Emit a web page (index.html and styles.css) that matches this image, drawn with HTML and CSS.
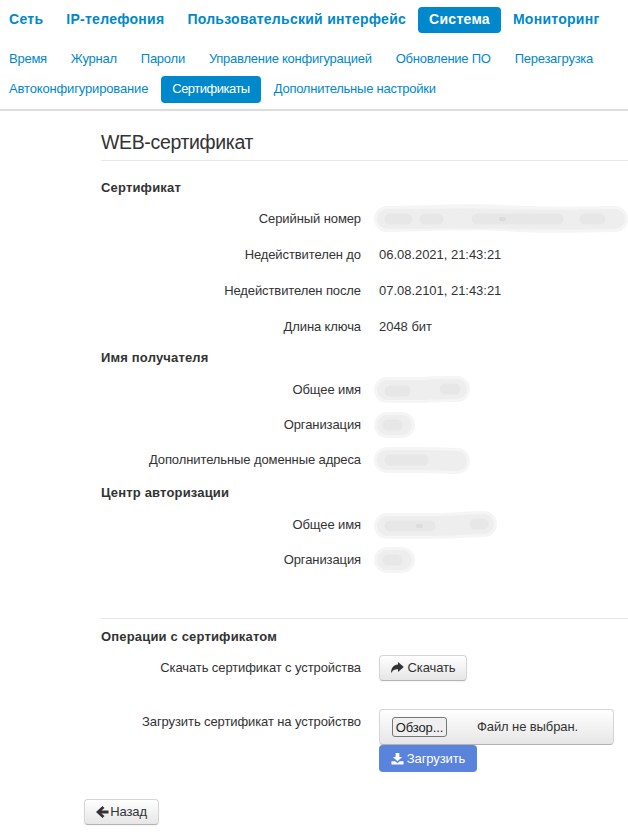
FILE: index.html
```html
<!DOCTYPE html>
<html lang="ru">
<head>
<meta charset="utf-8">
<title>WEB-сертификат</title>
<link rel="stylesheet" href="styles.css">
</head>
<body>
<header class="topbar">
  <nav class="nav-main">
    <a class="pill" href="#">Сеть</a>
    <a class="pill" href="#">IP-телефония</a>
    <a class="pill" href="#">Пользовательский интерфейс</a>
    <a class="pill active" href="#">Система</a>
    <a class="pill" href="#">Мониторинг</a>
  </nav>
  <nav class="nav-sub">
    <a class="pill" href="#">Время</a>
    <a class="pill" href="#">Журнал</a>
    <a class="pill" href="#">Пароли</a>
    <a class="pill" href="#">Управление конфигурацией</a>
    <a class="pill" href="#">Обновление ПО</a>
    <a class="pill" href="#">Перезагрузка</a>
    <a class="pill" href="#">Автоконфигурирование</a>
    <a class="pill active" href="#">Сертификаты</a>
    <a class="pill" href="#">Дополнительные настройки</a>
  </nav>
</header>
<main class="content">
  <h1 class="title">WEB-сертификат</h1>
  <h2 class="group first">Сертификат</h2>
  <div class="row"><span class="label">Серийный номер</span>
    <svg class="blob" width="254" height="26" viewBox="0 0 254 26">
      <path class="b1" d="M13 13 C60 12 100 10 130 12 S200 14 241 13"/>
      <path class="b2" d="M13 13 C60 13 100 12 130 13 S200 14 241 13"/>
      <path class="b3" d="M16 13H33M51 13H64M103 13H184M211 13H226"/>
      <path class="b4" d="M127 13H130"/>
    </svg>
  </div>
  <div class="row"><span class="label">Недействителен до</span><span class="value">06.08.2021, 21:43:21</span></div>
  <div class="row"><span class="label">Недействителен после</span><span class="value">07.08.2101, 21:43:21</span></div>
  <div class="row"><span class="label">Длина ключа</span><span class="value">2048 бит</span></div>
  <h2 class="group">Имя получателя</h2>
  <div class="row sub-first"><span class="label">Общее имя</span>
    <svg class="blob" width="96" height="26" viewBox="0 0 96 26">
      <path class="b1" d="M13 13H50C60 12 70 12 83 12"/>
      <path class="b2" d="M13 13H50C60 12 70 12 83 12"/>
      <path class="b3" d="M16 14H31M71 12H81"/>
    </svg>
  </div>
  <div class="row tight"><span class="label">Организация</span>
    <svg class="blob" width="42" height="26" viewBox="0 0 42 26">
      <path class="b1" d="M13 13H28"/><path class="b2" d="M13 13H28"/><path class="b3" d="M14 13H23"/>
    </svg>
  </div>
  <div class="row tight"><span class="label">Дополнительные доменные адреса</span>
    <svg class="blob" width="96" height="26" viewBox="0 0 96 26">
      <path class="b1" d="M13 13H50L83 14"/>
      <path class="b2" d="M13 13H50L83 14"/>
      <path class="b3" d="M16 13H49"/>
    </svg>
  </div>
  <h2 class="group">Центр авторизации</h2>
  <div class="row sub-first"><span class="label">Общее имя</span>
    <svg class="blob" width="124" height="26" viewBox="0 0 124 26">
      <path class="b1" d="M13 14H60C80 14 95 12 110 12"/>
      <path class="b2" d="M13 14H60C80 14 95 12 110 12"/>
      <path class="b3" d="M16 14H56M101 12H109"/>
      <path class="b4" d="M44 14H47"/>
    </svg>
  </div>
  <div class="row tight"><span class="label">Организация</span>
    <svg class="blob" width="42" height="26" viewBox="0 0 42 26">
      <path class="b1" d="M13 13H28"/><path class="b2" d="M13 13H28"/><path class="b3" d="M14 13H23"/>
    </svg>
  </div>
  <hr class="divider">
  <h2 class="group ops">Операции с сертификатом</h2>
  <div class="row action"><span class="label">Скачать сертификат с устройства</span>
    <button class="btn download" type="button">
      <svg class="icon" viewBox="0 0 14 14" width="14" height="14"><path d="M8 1 13.800 6 8 11V8.300C4.500 8.300 2.500 9.200 1 12.500 1 7.200 3.500 3.700 8 3.600Z"/></svg>Скачать
    </button>
  </div>
  <div class="row upload"><span class="label">Загрузить сертификат на устройство</span>
    <div class="upload-col">
      <div class="file"><button class="browse" type="button">Обзор...</button><span class="file-name">Файл не выбран.</span></div>
      <button class="btn primary" type="button">
        <svg class="icon" viewBox="0 0 14 14" width="13" height="13"><path d="M5 1H9V5.500H12L7 10 2 5.500H5ZM0.500 10H4.500L7 12 9.500 10H13.500V13.500H0.500Z"/></svg>Загрузить
      </button>
    </div>
  </div>
</main>
<footer class="back">
  <button class="btn btn-back" type="button">
    <svg class="icon" viewBox="0 0 14 14" width="14" height="14"><path d="M7.500 1 9.500 3 6.500 5.500H13.500V8.500H6.500L9.500 11 7.500 13 1 7Z"/></svg>Назад
  </button>
</footer>
</body>
</html>
```
FILE: styles.css
```css
* { box-sizing: border-box; }
html, body { margin: 0; padding: 0; }
body {
  width: 628px;
  height: 835px;
  overflow: hidden;
  background: #fff;
  font-family: "Liberation Sans", Arial, sans-serif;
  font-size: 13px;
  line-height: 20px;
  color: #333;
}
.topbar {
  height: 111px;
  padding-top: 7px;
  border-bottom: 2px solid #ddd;
}
.nav-main, .nav-sub {
  display: flex;
  flex-wrap: wrap;
}
.pill {
  display: block;
  color: #0088cc;
  text-decoration: none;
  border-radius: 4px;
}
.pill.active { background: #0088cc; color: #fff; }
.nav-main { height: 39px; column-gap: 1px; }
.nav-main .pill {
  height: 26px;
  padding: 2px 11px;
  font-size: 14px;
  font-weight: 700;
  letter-spacing: .27px;
}
.nav-main .pill:first-child { padding-left: 9px; }
.nav-sub { column-gap: 2px; row-gap: 3px; }
.nav-sub .pill {
  height: 27px;
  padding: 3px 11px;
  letter-spacing: -.25px;
}
.nav-sub .pill:first-child, .nav-sub .pill:nth-child(7) { padding-left: 9px; }
.nav-sub .pill:nth-child(7) { letter-spacing: -.15px; }
.nav-sub .pill.active { letter-spacing: -.5px; }
.content { padding-left: 101px; }
.title {
  margin: 0;
  height: 50px;
  padding-top: 19px;
  font-size: 19.5px;
  font-weight: 400;
  line-height: 24px;
  color: #333;
  border-bottom: 1px solid #e5e5e5;
  letter-spacing: -.35px;
}
.group {
  margin: 11px 0 0;
  font-size: 13px;
  font-weight: 700;
  line-height: 20px;
  letter-spacing: .17px;
  color: #333;
}
.group + .row { margin-top: 11px; }
.group.first { margin-top: 17px; }
.row {
  display: grid;
  grid-template-columns: 260px 1fr;
  column-gap: 18px;
  min-height: 20px;
  margin-top: 16px;
  letter-spacing: -.1px;
}
.group + .row.sub-first { margin-top: 12px; }
.row.tight { margin-top: 15px; }
.row.tight + .group { margin-top: 13px; }
.label { text-align: right; white-space: nowrap; }
.value { white-space: nowrap; letter-spacing: -.03px; }
.blob { display: block; margin: -3px 0 -3px -5px; overflow: visible; fill: none; stroke-linecap: round; stroke-linejoin: round; filter: blur(.6px); }
.b1 { stroke: #f5f5f5; stroke-width: 26px; }
.b2 { stroke: #eeeeee; stroke-width: 20px; }
.b3 { stroke: #e7e7e7; stroke-width: 11px; }
.b4 { stroke: #dcdcdc; stroke-width: 4px; }
.divider { margin: 48px 0 0; border: 0; border-top: 1px solid #e5e5e5; }
.group.ops { margin-top: 8px; }
.row.action { height: 20px; }
.row.upload { margin-top: 34px; height: 60px; }
.upload-col { display: flex; flex-direction: column; align-items: flex-start; margin-top: -3px; }
.btn {
  display: inline-flex;
  align-items: center;
  justify-content: center;
  height: 26px;
  padding: 0;
  font: inherit;
  letter-spacing: -.1px;
  color: #333;
  background: linear-gradient(#fff, #e6e6e6);
  border: 1px solid #d5d5d5;
  border-bottom-color: #b3b3b3;
  border-radius: 4px;
  box-shadow: 0 1px 2px rgba(0,0,0,.05);
}
.btn.download { justify-self: start; align-self: start; width: 88px; margin-top: -3px; }
.icon { display: block; margin-right: 3px; fill: currentColor; }
.btn.primary {
  width: 98px;
  height: 27px;
  color: #fff;
  background: #5a84dc;
  border: 0;
  border-radius: 4px;
  box-shadow: none;
}
.file {
  display: flex;
  align-items: center;
  width: 235px;
  height: 36px;
  padding-left: 12px;
  border: 1px solid #d5d5d5;
  border-bottom-color: #b3b3b3;
  border-radius: 4px;
  background: linear-gradient(#fff, #e6e6e6);
}
.browse {
  width: 55px;
  height: 20px;
  padding: 0;
  font: inherit;
  letter-spacing: -.1px;
  color: #222;
  background: #efefef;
  border: 1px solid #767676;
  border-radius: 3px;
}
.file-name { margin-left: 30px; letter-spacing: -.1px; }
.back { padding-top: 27px; padding-left: 84px; }
.btn-back { width: 75px; }
.btn-back .icon { margin: 0 1px 0 -1px; }
```
